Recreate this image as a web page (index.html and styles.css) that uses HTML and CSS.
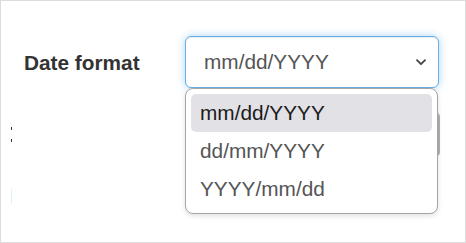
FILE: index.html
```html
<!DOCTYPE html>
<html>
<head>
<meta charset="utf-8">
<link rel="stylesheet" href="styles.css">
</head>
<body>
<div class="frame">
  <div class="row">
    <label class="label">Date format</label>
    <div class="field">
      <div class="select">
        <span class="value">mm/dd/YYYY</span>
        <svg class="chev" width="10" height="7" viewBox="0 0 10 7"><path d="M1 1.2 L5 5.2 L9 1.2" fill="none" stroke="#444" stroke-width="1.8" stroke-linecap="round" stroke-linejoin="round"/></svg>
      </div>
      <ul class="menu">
        <li class="opt active">mm/dd/YYYY</li>
        <li class="opt">dd/mm/YYYY</li>
        <li class="opt">YYYY/mm/dd</li>
      </ul>
    </div>
  </div>
  <div class="row2">
    <div class="marks">
      <span class="mk dark"></span>
      <span class="mk dark second"></span>
      <span class="mk cyan"></span>
    </div>
    <div class="ghost-input"></div>
  </div>
</div>
</body>
</html>
```
FILE: styles.css
```css
html, body { margin: 0; padding: 0; background: #fff; }
.frame {
  box-sizing: border-box;
  width: 466px;
  height: 243px;
  border: 1px solid #dcdcdc;
  padding-top: 35px;
  font-family: "Liberation Sans", Arial, sans-serif;
  overflow: hidden;
}
.row { display: flex; align-items: center; padding-left: 23px; }
.label {
  width: 161px;
  font-weight: bold;
  font-size: 20.8px;
  color: #333;
  padding-top: 1px;
}
.field { position: relative; z-index: 2; }
.select {
  box-sizing: border-box;
  width: 254px;
  height: 52px;
  border: 1px solid #66afe9;
  border-radius: 6px;
  box-shadow: inset 0 1px 1px rgba(0,0,0,.075), 0 0 8px rgba(102,175,233,.55);
  display: flex;
  align-items: center;
  justify-content: space-between;
  padding: 0 12px 0 18px;
  background: #fff;
}
.value { font-size: 20.8px; color: #555; padding-bottom: 1px; }
.chev { display: block; margin-top: 1px; }
.menu {
  position: absolute;
  left: 0;
  top: 52px;
  box-sizing: border-box;
  width: 253px;
  margin: 0;
  padding: 5px 5px 5px 5px;
  list-style: none;
  background: #fff;
  border: 1px solid #a6a6a6;
  border-radius: 8px;
  box-shadow: 0 2px 5px rgba(0,0,0,.12);
}
.opt {
  height: 38px;
  line-height: 38px;
  padding-left: 9px;
  font-size: 20.8px;
  color: #555;
  border-radius: 5px;
}
.opt.active { background: #e2e1e6; color: #1b1b1b; }
.row2 { display: flex; align-items: flex-start; margin-top: 24px; }
.marks { width: 1px; margin-left: 10px; margin-top: 15px; display: flex; flex-direction: column; }
.mk { display: block; width: 1px; }
.mk.dark { height: 3px; background: #333; }
.mk.second { margin-top: 9px; }
.mk.cyan { height: 15px; margin-top: 47px; background: #d6f6f8; }
.ghost-input {
  box-sizing: border-box;
  margin-left: 173px;
  width: 255px;
  height: 45px;
  border: 2px solid #b0b0b0;
  border-radius: 5px;
}
```
